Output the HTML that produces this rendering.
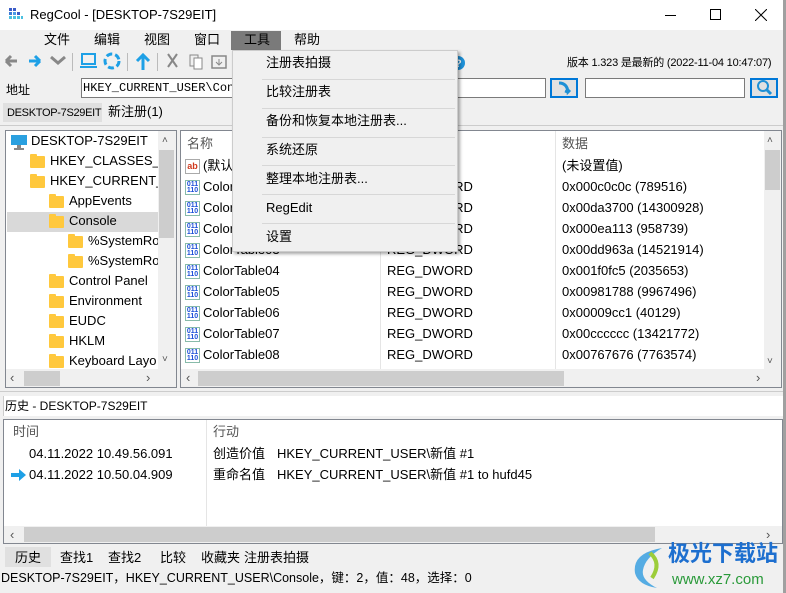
<!DOCTYPE html>
<html><head><meta charset="utf-8"><style>
*{margin:0;padding:0;box-sizing:border-box}
body{width:786px;height:593px;overflow:hidden;background:#f0f0f0;font-family:"Liberation Sans","Noto Sans CJK SC",sans-serif;font-size:13px;color:#000;position:relative}
.a{position:absolute;white-space:nowrap}
.t{position:absolute;white-space:nowrap;line-height:16px}
.box{position:absolute;background:#fff;border:1px solid #828790}
.sb{position:absolute;background:#f0f0f0}
.th{position:absolute;background:#cdcdcd}
.fold{position:absolute;width:15px;height:12px;background:#ffc83d;border-radius:1px}
.fold:before{content:"";position:absolute;left:0;top:-2px;width:7px;height:3px;background:#ffc83d;border-radius:1px 1px 0 0}
.ic{position:absolute;width:15px;height:15px;border:1px solid #8ba;background:#fff;font-size:7px;line-height:6px;color:#1c4fd8;font-weight:bold;text-align:center;padding-top:1px}
.sep{position:absolute;left:262px;width:193px;height:1px;background:#d7d7d7}
.clip{position:absolute;overflow:hidden}
</style></head><body>
<div class="a" style="left:0;top:0;width:786px;height:30px;background:#fff"></div>
<div class="a" style="left:783px;top:0;width:3px;height:593px;background:#a0a0a0"></div>
<svg class="a" style="left:9px;top:8px" width="14" height="14"><rect x="0" y="0" width="3" height="3" fill="#3a5bc7"/><rect x="4" y="0" width="3" height="3" fill="#3a5bc7"/><rect x="0" y="4" width="3" height="3" fill="#3a7bd7"/><rect x="4" y="4" width="3" height="3" fill="#4a9be7"/><rect x="8" y="4" width="3" height="3" fill="#3a5bc7"/><rect x="0" y="8" width="3" height="3" fill="#4ac0e0"/><rect x="4" y="8" width="3" height="3" fill="#4ac0e0"/><rect x="8" y="8" width="3" height="3" fill="#4ac0e0"/><rect x="12" y="8" width="2" height="3" fill="#4ac0e0"/></svg>
<div class="t" style="left:30px;top:7px;font-size:13px">RegCool - [DESKTOP-7S29EIT]</div>
<div class="a" style="left:665px;top:15px;width:11px;height:1px;background:#000"></div>
<div class="a" style="left:710px;top:9px;width:11px;height:11px;border:1px solid #000"></div>
<svg class="a" style="left:755px;top:9px" width="12" height="12"><path d="M0 0L12 12M12 0L0 12" stroke="#000" stroke-width="1"/></svg>
<div class="t" style="left:44px;top:32px">文件</div>
<div class="t" style="left:94px;top:32px">编辑</div>
<div class="t" style="left:144px;top:32px">视图</div>
<div class="t" style="left:194px;top:32px">窗口</div>
<div class="a" style="left:231px;top:31px;width:50px;height:19px;background:#7a7a7a"></div>
<div class="t" style="left:244px;top:32px">工具</div>
<div class="t" style="left:294px;top:32px">帮助</div>
<svg class="a" style="left:0;top:50px" width="240" height="24">
<path d="M6 11h11M6 11l5-5M6 11l5 5" stroke="#888" stroke-width="3" fill="none"/>
<path d="M40 11h-11M40 11l-5-5M40 11l-5 5" stroke="#1ea0e6" stroke-width="3" fill="none"/>
<path d="M51 7l7 6 7-6" stroke="#888" stroke-width="3" fill="none"/>
<rect x="72" y="3" width="1" height="18" fill="#bbb"/>
<rect x="82" y="4" width="13" height="10" fill="none" stroke="#1ea0e6" stroke-width="2"/><rect x="80" y="16" width="17" height="2" fill="#1ea0e6"/>
<circle cx="112" cy="11" r="7" fill="none" stroke="#1ea0e6" stroke-width="3" stroke-dasharray="6 3"/>
<rect x="127" y="3" width="1" height="18" fill="#bbb"/>
<path d="M143 20V6M137 11l6-6 6 6" stroke="#1ea0e6" stroke-width="3" fill="none"/>
<rect x="157" y="3" width="1" height="18" fill="#bbb"/>
<path d="M168 4l9 13M177 4l-9 13" stroke="#888" stroke-width="2"/>
<rect x="190" y="5" width="8" height="11" fill="none" stroke="#888"/><rect x="194" y="8" width="8" height="11" fill="#fff" stroke="#888"/>
<rect x="212" y="6" width="14" height="12" fill="none" stroke="#888" stroke-width="1.5"/><path d="M219 9v5M216 12l3 3 3-3" stroke="#888" fill="none"/>
</svg>
<svg class="a" style="left:450px;top:55px" width="16" height="16"><circle cx="8" cy="8" r="7" fill="#1e90d6"/><text x="5" y="12" font-size="11" fill="#fff" font-family="Liberation Sans" font-weight="bold">?</text></svg>
<div class="t" style="left:567px;top:55px;font-size:11px;letter-spacing:-0.2px">版本 1.323 是最新的 (2022-11-04 10:47:07)</div>
<div class="t" style="left:6px;top:82px;font-size:12px">地址</div>
<div class="box" style="left:81px;top:78px;width:465px;height:20px;border-color:#7a7a7a"></div>
<div class="t" style="left:83px;top:80px;font-family:'Liberation Mono',monospace;font-size:12px">HKEY_CURRENT_USER\Console</div>
<div class="a" style="left:550px;top:78px;width:28px;height:20px;background:#e1e1e1;border:2px solid #0078d7"></div>
<svg class="a" style="left:556px;top:80px" width="16" height="16"><path d="M3 3q8 0 9 9l2-2M12 12l-3-1" stroke="#1e90d6" stroke-width="3" fill="none"/></svg>
<div class="box" style="left:585px;top:78px;width:160px;height:20px;border-color:#7a7a7a"></div>
<div class="a" style="left:750px;top:78px;width:28px;height:20px;background:#e1e1e1;border:2px solid #0078d7"></div>
<svg class="a" style="left:755px;top:79px" width="18" height="17"><circle cx="8" cy="7" r="5" fill="none" stroke="#1e90d6" stroke-width="2"/><path d="M11 10l5 5" stroke="#1e90d6" stroke-width="3"/></svg>
<div class="a" style="left:3px;top:103px;width:99px;height:19px;background:#e0e0e0"></div>
<div class="t" style="left:7px;top:105px;font-size:11px;letter-spacing:-0.3px">DESKTOP-7S29EIT</div>
<div class="t" style="left:108px;top:104px">新注册(1)</div>
<div class="a" style="left:0;top:125px;width:783px;height:1px;background:#ccc"></div>
<div class="box" style="left:5px;top:130px;width:172px;height:258px"></div>
<div class="clip" style="left:6px;top:131px;width:152px;height:238px">
<svg class="a" style="left:4px;top:2px" width="18" height="18"><rect x="1" y="2" width="16" height="10" fill="#2aa0e0"/><rect x="7" y="12" width="4" height="3" fill="#888"/><rect x="4" y="15" width="10" height="2" fill="#888"/></svg>
<div class="t" style="left:25px;top:2px">DESKTOP-7S29EIT</div>
<div class="fold" style="left:24px;top:25px"></div><div class="t" style="left:44px;top:22px">HKEY_CLASSES_RO</div>
<div class="fold" style="left:24px;top:45px"></div><div class="t" style="left:44px;top:42px">HKEY_CURRENT_U</div>
<div class="fold" style="left:43px;top:65px"></div><div class="t" style="left:63px;top:62px">AppEvents</div>
<div class="a" style="left:1px;top:81px;width:151px;height:20px;background:#d9d9d9"></div>
<div class="fold" style="left:43px;top:85px"></div><div class="t" style="left:63px;top:82px">Console</div>
<div class="fold" style="left:62px;top:105px"></div><div class="t" style="left:82px;top:102px">%SystemRoo</div>
<div class="fold" style="left:62px;top:125px"></div><div class="t" style="left:82px;top:122px">%SystemRoo</div>
<div class="fold" style="left:43px;top:145px"></div><div class="t" style="left:63px;top:142px">Control Panel</div>
<div class="fold" style="left:43px;top:165px"></div><div class="t" style="left:63px;top:162px">Environment</div>
<div class="fold" style="left:43px;top:185px"></div><div class="t" style="left:63px;top:182px">EUDC</div>
<div class="fold" style="left:43px;top:205px"></div><div class="t" style="left:63px;top:202px">HKLM</div>
<div class="fold" style="left:43px;top:225px"></div><div class="t" style="left:63px;top:222px">Keyboard Layo</div>
</div>
<div class="sb" style="left:158px;top:131px;width:18px;height:238px"></div>
<div class="th" style="left:159px;top:150px;width:15px;height:88px"></div>
<div class="t" style="left:162px;top:133px;font-size:10px;color:#555">˄</div>
<div class="t" style="left:162px;top:352px;font-size:10px;color:#555">˅</div>
<div class="sb" style="left:6px;top:369px;width:170px;height:18px"></div>
<div class="th" style="left:24px;top:371px;width:36px;height:15px"></div>
<div class="t" style="left:10px;top:370px;color:#555">‹</div>
<div class="t" style="left:146px;top:370px;color:#555">›</div>
<div class="box" style="left:180px;top:130px;width:602px;height:258px"></div>
<div class="a" style="left:380px;top:131px;width:1px;height:238px;background:#e5e5e5"></div>
<div class="a" style="left:555px;top:131px;width:1px;height:238px;background:#e5e5e5"></div>
<div class="t" style="left:187px;top:136px;color:#555">名称</div>
<div class="t" style="left:562px;top:136px;color:#555">数据</div>
<div class="ic" style="left:185px;top:159px;color:#d0381c;font-size:9px;line-height:10px;border-color:#aaa">ab</div><div class="t" style="left:203px;top:158px">(默认</div>
<div class="t" style="left:562px;top:158px">(未设置值)</div>
<div class="ic" style="left:185px;top:180px">011<br>110</div><div class="t" style="left:203px;top:179px">Color</div><div class="t" style="left:387px;top:179px">REG_DWORD</div><div class="t" style="left:562px;top:179px">0x000c0c0c (789516)</div>
<div class="ic" style="left:185px;top:201px">011<br>110</div><div class="t" style="left:203px;top:200px">Color</div><div class="t" style="left:387px;top:200px">REG_DWORD</div><div class="t" style="left:562px;top:200px">0x00da3700 (14300928)</div>
<div class="ic" style="left:185px;top:222px">011<br>110</div><div class="t" style="left:203px;top:221px">Color</div><div class="t" style="left:387px;top:221px">REG_DWORD</div><div class="t" style="left:562px;top:221px">0x000ea113 (958739)</div>
<div class="ic" style="left:185px;top:243px">011<br>110</div><div class="t" style="left:203px;top:242px">ColorTable03</div><div class="t" style="left:387px;top:242px">REG_DWORD</div><div class="t" style="left:562px;top:242px">0x00dd963a (14521914)</div>
<div class="ic" style="left:185px;top:264px">011<br>110</div><div class="t" style="left:203px;top:263px">ColorTable04</div><div class="t" style="left:387px;top:263px">REG_DWORD</div><div class="t" style="left:562px;top:263px">0x001f0fc5 (2035653)</div>
<div class="ic" style="left:185px;top:285px">011<br>110</div><div class="t" style="left:203px;top:284px">ColorTable05</div><div class="t" style="left:387px;top:284px">REG_DWORD</div><div class="t" style="left:562px;top:284px">0x00981788 (9967496)</div>
<div class="ic" style="left:185px;top:306px">011<br>110</div><div class="t" style="left:203px;top:305px">ColorTable06</div><div class="t" style="left:387px;top:305px">REG_DWORD</div><div class="t" style="left:562px;top:305px">0x00009cc1 (40129)</div>
<div class="ic" style="left:185px;top:327px">011<br>110</div><div class="t" style="left:203px;top:326px">ColorTable07</div><div class="t" style="left:387px;top:326px">REG_DWORD</div><div class="t" style="left:562px;top:326px">0x00cccccc (13421772)</div>
<div class="ic" style="left:185px;top:348px">011<br>110</div><div class="t" style="left:203px;top:347px">ColorTable08</div><div class="t" style="left:387px;top:347px">REG_DWORD</div><div class="t" style="left:562px;top:347px">0x00767676 (7763574)</div>
<div class="sb" style="left:764px;top:131px;width:17px;height:238px"></div>
<div class="th" style="left:765px;top:150px;width:15px;height:40px"></div>
<div class="t" style="left:767px;top:133px;font-size:10px;color:#555">˄</div>
<div class="t" style="left:767px;top:354px;font-size:10px;color:#555">˅</div>
<div class="sb" style="left:181px;top:369px;width:600px;height:18px"></div>
<div class="th" style="left:198px;top:371px;width:366px;height:15px"></div>
<div class="t" style="left:186px;top:370px;color:#555">‹</div>
<div class="t" style="left:756px;top:370px;color:#555">›</div>
<div class="a" style="left:0;top:391px;width:783px;height:1px;background:#ccc"></div>
<div class="a" style="left:3px;top:396px;width:780px;height:20px;background:#fff;border-left:1px solid #ccc"></div>
<div class="t" style="left:5px;top:398px;font-size:12px">历史 - DESKTOP-7S29EIT</div>
<div class="box" style="left:3px;top:419px;width:780px;height:125px"></div>
<div class="a" style="left:206px;top:420px;width:1px;height:106px;background:#e5e5e5"></div>
<div class="t" style="left:13px;top:424px;color:#555">时间</div>
<div class="t" style="left:213px;top:424px;color:#555">行动</div>
<div class="t" style="left:29px;top:446px">04.11.2022 10.49.56.091</div>
<div class="t" style="left:213px;top:446px">创造价值</div><div class="t" style="left:277px;top:446px">HKEY_CURRENT_USER\新值 #1</div>
<svg class="a" style="left:11px;top:469px" width="16" height="12"><path d="M0 4h8V0l7 6-7 6V8H0z" fill="#1ea0e6"/></svg>
<div class="t" style="left:29px;top:467px">04.11.2022 10.50.04.909</div>
<div class="t" style="left:213px;top:467px">重命名值</div><div class="t" style="left:277px;top:467px">HKEY_CURRENT_USER\新值 #1 to hufd45</div>
<div class="sb" style="left:4px;top:526px;width:778px;height:17px"></div>
<div class="th" style="left:24px;top:527px;width:631px;height:15px"></div>
<div class="t" style="left:10px;top:527px;color:#555">‹</div>
<div class="t" style="left:766px;top:527px;color:#555">›</div>
<div class="a" style="left:5px;top:547px;width:46px;height:20px;background:#e0e0e0"></div>
<div class="t" style="left:15px;top:550px">历史</div>
<div class="t" style="left:60px;top:550px">查找1</div>
<div class="t" style="left:108px;top:550px">查找2</div>
<div class="t" style="left:160px;top:550px">比较</div>
<div class="t" style="left:201px;top:550px">收藏夹</div>
<div class="t" style="left:244px;top:550px">注册表拍摄</div>
<div class="t" style="left:1px;top:570px;font-size:12.5px">DESKTOP-7S29EIT，HKEY_CURRENT_USER\Console，键：2，值：48，选择：0</div>
<svg class="a" style="left:624px;top:543px" width="44" height="50"><path d="M38 5q-30 5-27 25q3 12 22 15q-16-8-14-18q2-12 19-22z" fill="#3aa0e0" opacity=".85"/><path d="M26 10q12 10 2 25" stroke="#9ccd3a" stroke-width="4" fill="none"/></svg>
<div class="t" style="left:668px;top:541px;font-size:22px;line-height:26px;color:#1d6fcf;font-weight:bold">极光下载站</div>
<div class="t" style="left:672px;top:572px;font-size:15px;color:#2a9a3a">www.xz7.com</div>
<div class="a" style="left:232px;top:50px;width:226px;height:202px;background:#f0f0f0;border:1px solid #ccc;box-shadow:2px 2px 3px rgba(0,0,0,.35)"></div>
<div class="t" style="left:266px;top:55px">注册表拍摄</div>
<div class="sep" style="top:79px"></div>
<div class="t" style="left:266px;top:84px">比较注册表</div>
<div class="sep" style="top:108px"></div>
<div class="t" style="left:266px;top:113px">备份和恢复本地注册表...</div>
<div class="sep" style="top:137px"></div>
<div class="t" style="left:266px;top:142px">系统还原</div>
<div class="sep" style="top:165px"></div>
<div class="t" style="left:266px;top:171px">整理本地注册表...</div>
<div class="sep" style="top:194px"></div>
<div class="t" style="left:266px;top:200px">RegEdit</div>
<div class="sep" style="top:223px"></div>
<div class="t" style="left:266px;top:229px">设置</div>
</body></html>
